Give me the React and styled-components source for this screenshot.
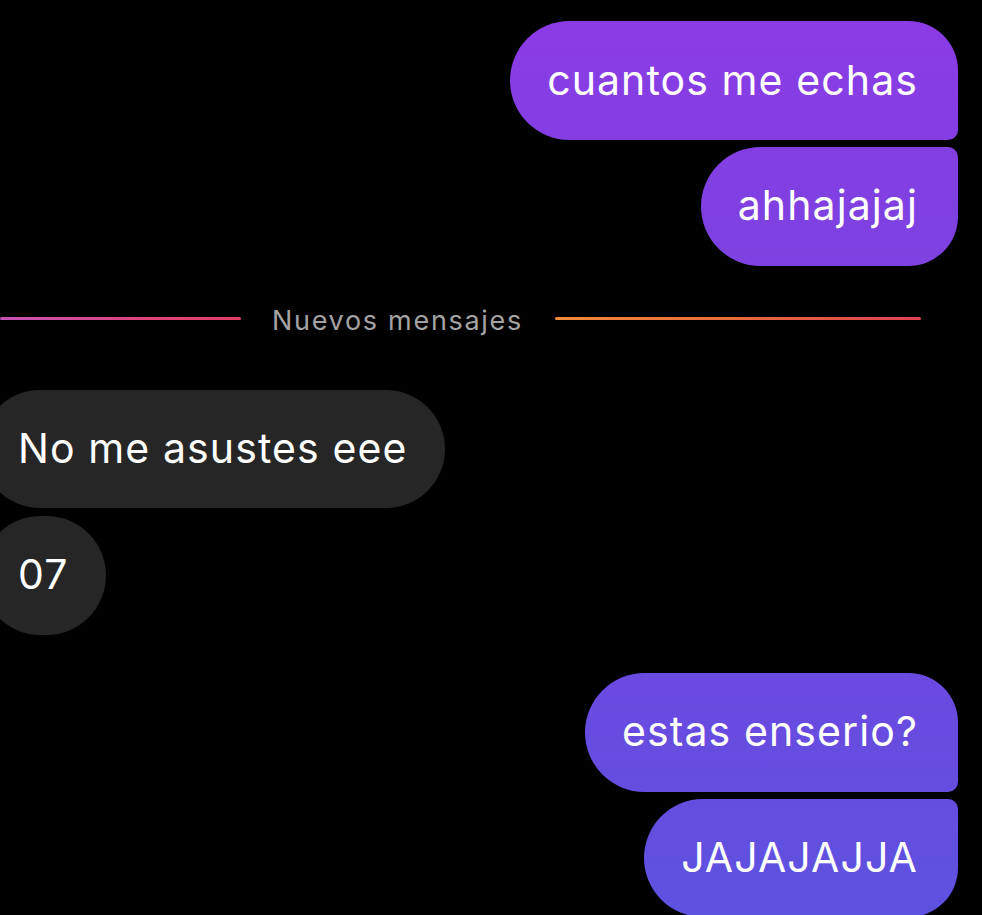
import React from "react";
import styled, { createGlobalStyle } from "styled-components";

const GlobalStyle = createGlobalStyle`
    html, body {
        margin: 0;
        padding: 0;
        background: #000000;
        overflow: hidden;
    }
    body {
        font-family: Inter, "Noto Sans", "Liberation Sans", sans-serif;
        -webkit-font-smoothing: antialiased;
    }
`

const messages = [
    { id: 1, side: "sent", text: "cuantos me echas", pos: "first" },
    { id: 2, side: "sent", text: "ahhajajaj", pos: "last" },
    { id: "sep", side: "separator", text: "Nuevos mensajes" },
    { id: 3, side: "received", text: "No me asustes eee", pos: "first" },
    { id: 4, side: "received", text: "07", pos: "last" },
    { id: 5, side: "sent", text: "estas enserio?", pos: "first" },
    { id: 6, side: "sent", text: "JAJAJAJJA", pos: "last" },
]

const groupMessages = (list) => {
    const groups = []
    list.forEach((m) => {
        const last = groups[groups.length - 1]
        if (last && last.side === m.side && m.side !== "separator") {
            last.items.push(m)
        } else {
            groups.push({ side: m.side, items: [m] })
        }
    })
    return groups
}

export default function App() {
    const groups = groupMessages(messages)

    return (
        <>
            <GlobalStyle />
            <Thread>
                {groups.map((group, index) => {
                    if (group.side === "separator") {
                        return (
                            <Separator key={index}>
                                <LeftLine />
                                <SeparatorText>{group.items[0].text}</SeparatorText>
                                <RightLine />
                            </Separator>
                        )
                    }
                    return (
                        <Group key={index} $side={group.side}>
                            {group.items.map((m) => (
                                <Bubble key={m.id} $side={m.side} $pos={m.pos}>
                                    {m.text}
                                </Bubble>
                            ))}
                        </Group>
                    )
                })}
            </Thread>
        </>
    )
}

const Thread = styled.div`
    display: flex;
    flex-direction: column;
    height: 915px;
    padding-top: 21px;
    box-sizing: border-box;
`

const Group = styled.div`
    display: flex;
    flex-direction: column;
    align-items: ${props => props.$side === "sent" ? "flex-end" : "flex-start"};
    gap: ${props => props.$side === "sent" ? "7px" : "8px"};
    padding-right: ${props => props.$side === "sent" ? "24px" : "0"};
    margin-left: ${props => props.$side === "sent" ? "0" : "-19px"};

    & + & {
        margin-top: 38px;
    }
`

const sentRadius = {
    first: "60px 50px 10px 60px",
    last: "60px 10px 50px 60px",
}

const Bubble = styled.div`
    display: flex;
    align-items: center;
    box-sizing: border-box;
    height: ${props => props.$pos === "first" && props.$side === "sent" ? "119px" : "118.5px"};
    padding: ${props => props.$side === "sent" ? "0 40px 2px 37px" : "0 38px 2px 37px"};
    font-size: 41px;
    letter-spacing: 1.1px;
    color: #ffffff;
    white-space: nowrap;
    border-radius: ${props => props.$side === "sent" ? sentRadius[props.$pos] : "60px"};
    background: ${props => props.$side === "sent"
        ? "linear-gradient(180deg, #8c3be6 0%, #7c42e0 30%, #6a4ae0 75%, #5e52e0 100%) fixed"
        : "#262626"};
`

const Separator = styled.div`
    display: flex;
    align-items: center;
    height: 30px;
    margin: 38px 61px 56px 0;
`

const Line = styled.div`
    height: 3px;
    border-radius: 2px;
`

const LeftLine = styled(Line)`
    width: 241px;
    background: linear-gradient(90deg, #c653b8 0%, #e0447a 60%, #e23c68 100%);
`

const RightLine = styled(Line)`
    flex: 1;
    background: linear-gradient(90deg, #f08a3a 0%, #ea6a3c 50%, #e04050 100%);
`

const SeparatorText = styled.span`
    padding: 3px 32px 0 31px;
    font-size: 27px;
    color: #a3a3a3;
    letter-spacing: 1.7px;
`
